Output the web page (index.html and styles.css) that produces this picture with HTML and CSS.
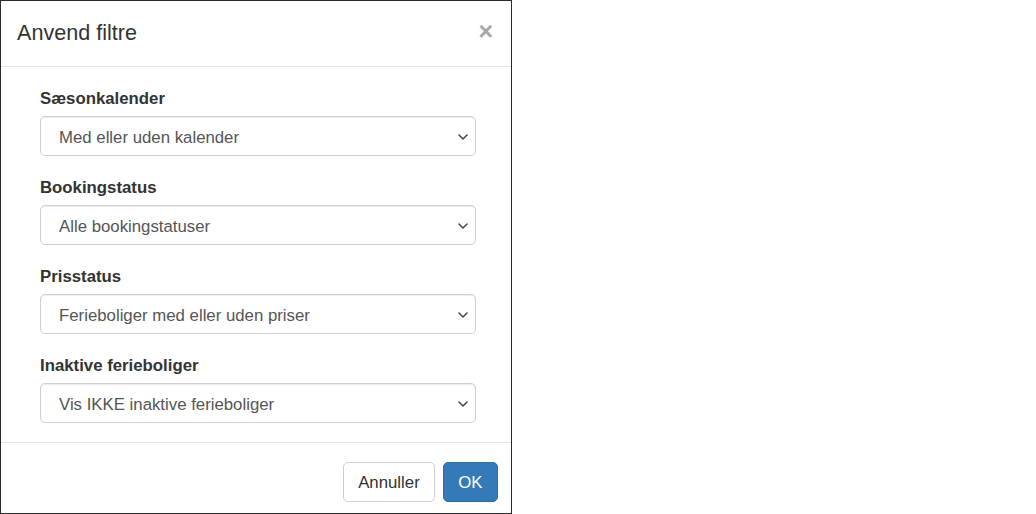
FILE: index.html
```html
<!DOCTYPE html>
<html lang="da">
<head>
<meta charset="utf-8">
<title>Anvend filtre</title>
<link rel="stylesheet" href="styles.css">
</head>
<body>
<div class="modal">
  <div class="modal-header">
    <h4 class="modal-title">Anvend filtre</h4>
    <button class="close" type="button" aria-label="Luk">×</button>
  </div>
  <div class="modal-body">
    <div class="form-group">
      <label class="form-label">Sæsonkalender</label>
      <div class="select-wrap">
        <select class="form-control"><option>Med eller uden kalender</option></select>
        <svg class="chevron" width="10" height="6" viewBox="0 0 10 6"><path d="M1 1 L5 5 L9 1" fill="none" stroke="#4a4a4a" stroke-width="1.6" stroke-linecap="round" stroke-linejoin="round"/></svg>
      </div>
    </div>
    <div class="form-group">
      <label class="form-label">Bookingstatus</label>
      <div class="select-wrap">
        <select class="form-control"><option>Alle bookingstatuser</option></select>
        <svg class="chevron" width="10" height="6" viewBox="0 0 10 6"><path d="M1 1 L5 5 L9 1" fill="none" stroke="#4a4a4a" stroke-width="1.6" stroke-linecap="round" stroke-linejoin="round"/></svg>
      </div>
    </div>
    <div class="form-group">
      <label class="form-label">Prisstatus</label>
      <div class="select-wrap">
        <select class="form-control"><option>Ferieboliger med eller uden priser</option></select>
        <svg class="chevron" width="10" height="6" viewBox="0 0 10 6"><path d="M1 1 L5 5 L9 1" fill="none" stroke="#4a4a4a" stroke-width="1.6" stroke-linecap="round" stroke-linejoin="round"/></svg>
      </div>
    </div>
    <div class="form-group">
      <label class="form-label">Inaktive ferieboliger</label>
      <div class="select-wrap">
        <select class="form-control"><option>Vis IKKE inaktive ferieboliger</option></select>
        <svg class="chevron" width="10" height="6" viewBox="0 0 10 6"><path d="M1 1 L5 5 L9 1" fill="none" stroke="#4a4a4a" stroke-width="1.6" stroke-linecap="round" stroke-linejoin="round"/></svg>
      </div>
    </div>
  </div>
  <div class="modal-footer">
    <button class="btn btn-default" type="button">Annuller</button>
    <button class="btn btn-primary" type="button">OK</button>
  </div>
</div>
</body>
</html>
```

FILE: styles.css
```css
html, body {
  margin: 0;
  padding: 0;
  background: #fff;
}
body {
  font-family: "Liberation Sans", Arial, Helvetica, sans-serif;
  font-size: 16.8px;
  color: #333;
}
.modal {
  box-sizing: border-box;
  width: 512px;
  height: 514px;
  border: 1px solid #2b2b2b;
  background: #fff;
  display: flex;
  flex-direction: column;
}
.modal-header {
  box-sizing: border-box;
  height: 66px;
  padding: 20px 18px 0 16px;
  border-bottom: 1px solid #e5e5e5;
  display: flex;
  justify-content: space-between;
  align-items: flex-start;
}
.modal-title {
  margin: 0;
  font-size: 21.6px;
  font-weight: normal;
  line-height: 1.1;
  color: #333;
}
.close {
  margin: -2px 0 0 0;
  padding: 0;
  border: 0;
  background: none;
  font-family: "Liberation Sans", Arial, sans-serif;
  font-size: 25px;
  font-weight: bold;
  line-height: 1;
  color: #a8a8a8;
  cursor: pointer;
}
.modal-body {
  padding: 19px 35px 0 39px;
  height: 375px;
  box-sizing: border-box;
}
.form-group {
  margin-bottom: 19px;
}
.form-group:last-child {
  margin-bottom: 0;
}
.form-label {
  display: block;
  font-weight: bold;
  font-size: 16.8px;
  line-height: 24px;
  padding-top: 1px;
  height: 24px;
  box-sizing: border-box;
  margin-bottom: 6px;
  color: #333;
}
.select-wrap {
  position: relative;
}
.form-control {
  display: block;
  box-sizing: border-box;
  width: 100%;
  height: 40px;
  padding: 2px 30px 0 18px;
  font-family: "Liberation Sans", Arial, sans-serif;
  font-size: 16.8px;
  color: #555;
  background: #fff;
  border: 1px solid #cfcfcf;
  border-radius: 5px;
  box-shadow: inset 0 1px 1px rgba(0,0,0,0.075);
  -webkit-appearance: none;
  appearance: none;
}
.chevron {
  position: absolute;
  right: 8px;
  top: 18px;
  pointer-events: none;
}
.modal-footer {
  flex: 1;
  border-top: 1px solid #e5e5e5;
  padding: 19px 13px 0 0;
  display: flex;
  justify-content: flex-end;
  align-items: flex-start;
  gap: 8px;
}
.btn {
  box-sizing: border-box;
  height: 40px;
  padding: 2px 14px 0;
  font-family: "Liberation Sans", Arial, sans-serif;
  font-size: 16.8px;
  border-radius: 5px;
  border: 1px solid transparent;
  cursor: pointer;
}
.btn-default {
  background: #fff;
  color: #333;
  border-color: #cfcfcf;
}
.btn-primary {
  padding: 2px 14.5px 0;
  background: #337ab7;
  color: #fff;
  border-color: #2e6da4;
}
```
